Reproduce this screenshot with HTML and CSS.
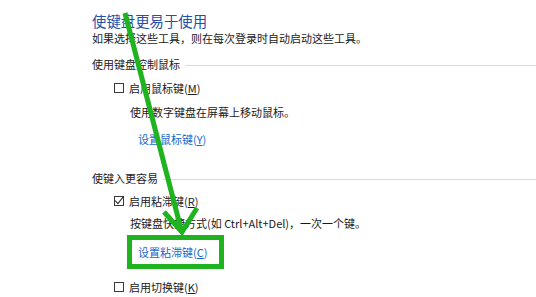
FILE: index.html
```html
<!DOCTYPE html>
<html lang="zh-CN">
<head>
<meta charset="utf-8">
<link rel="stylesheet" href="styles.css">
</head>
<body>
<div class="page">
  <h1 class="title">使键盘更易于使用</h1>
  <p class="desc">如果选择这些工具，则在每次登录时自动启动这些工具。</p>

  <div class="group-head g1">使用键盘控制鼠标</div>
  <label class="check c1"><span class="box"></span>启用鼠标键(<u>M</u>)</label>
  <p class="note n1">使用数字键盘在屏幕上移动鼠标。</p>
  <a class="link l1">设置鼠标键(<u>Y</u>)</a>

  <div class="group-head g2">使键入更容易</div>
  <label class="check c2"><span class="box checked"><svg viewBox="0 0 10 10" width="10" height="10"><path d="M1.2 4.6 L3.9 7.6 L9.6 0.4" fill="none" stroke="#333" stroke-width="1.1"/></svg></span>启用粘滞键(<u>R</u>)</label>
  <p class="note n2">按键盘快捷方式(如 Ctrl+Alt+Del)，一次一个键。</p>
  <a class="link l2">设置粘滞键(<u>C</u>)</a>
  <label class="check c3"><span class="box"></span>启用切换键(<u>K</u>)</label>
</div>
<svg class="annot" width="536" height="297" viewBox="0 0 536 297">
  <g stroke="#1fb41f" fill="none" stroke-width="5">
    <line x1="125" y1="13" x2="181" y2="229"/>
    <polyline points="164,212 182,232 197,208" stroke-linejoin="miter"/>
    <rect x="129.5" y="237.5" width="92" height="29"/>
  </g>
</svg>
</body>
</html>
```

FILE: styles.css
```css
html, body {
  margin: 0;
  padding: 0;
  background: #ffffff;
}
body {
  width: 536px;
  height: 297px;
  overflow: hidden;
  position: relative;
  font-family: "Noto Sans CJK SC", "Noto Sans", sans-serif;
  color: #1a1a1a;
  font-size: 11px;
}
.page {
  display: flex;
  flex-direction: column;
  align-items: flex-start;
  padding: 12px 0 0 92px;
}
.title {
  margin: 0;
  font-size: 14.4px;
  line-height: 18px;
  font-weight: normal;
  color: #2350a8;
}
.desc, .note {
  margin: 0;
  line-height: 16px;
}
.group-head {
  align-self: stretch;
  display: flex;
  align-items: center;
  line-height: 16px;
  color: #222;
}
.group-head::after {
  content: "";
  flex: 1;
  height: 1px;
  background: #dadada;
  margin-left: 5px;
  margin-top: 2px;
}
.check {
  display: flex;
  align-items: center;
  line-height: 16px;
  margin-left: 22px;
}
.box {
  width: 10px;
  height: 10px;
  border: 1px solid #3a3a3a;
  box-sizing: border-box;
  margin-right: 5px;
  display: flex;
  align-items: center;
  justify-content: center;
  overflow: visible;
}
.box svg { display: block; flex: none; overflow: visible; }
.note { margin-left: 38px; }
.link {
  margin-left: 46px;
  line-height: 16px;
  color: #1a66c8;
}
u { text-decoration: underline; text-underline-offset: 1px; }
.g1 { margin-top: 10px; }
.c1 { margin-top: 8px; }
.n1 { margin-top: 8px; }
.l1 { margin-top: 11px; }
.g2 { margin-top: 23px; }
.c2 { margin-top: 7px; }
.n2 { margin-top: 6px; }
.l2 { margin-top: 13px; }
.c3 { margin-top: 19px; }
.annot {
  position: absolute;
  left: 0;
  top: 0;
  pointer-events: none;
}
```
